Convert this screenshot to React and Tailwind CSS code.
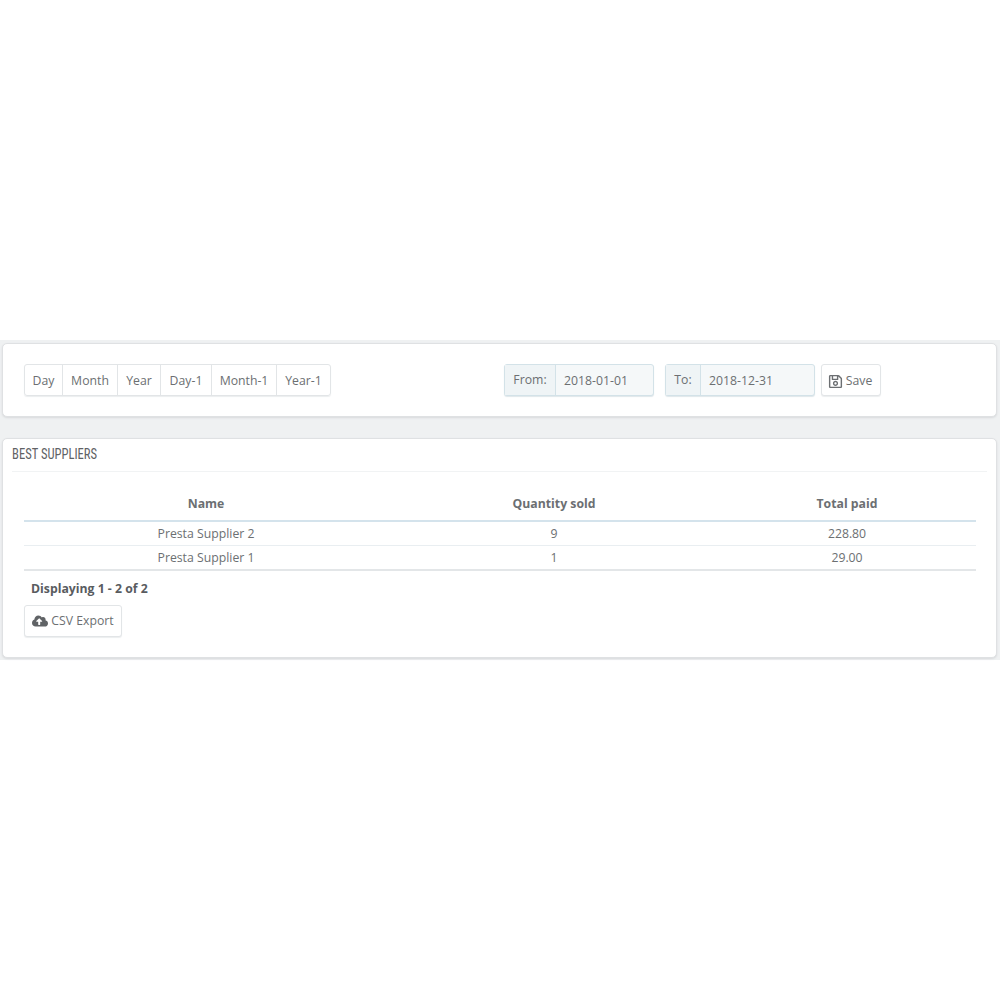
import React from "react";
import { FaRegSave, FaCloudUploadAlt } from "react-icons/fa";

const ranges = [
  ["Day", "w-[37px]"],
  ["Month", "w-[55px]"],
  ["Year", "w-[43px]"],
  ["Day-1", "w-[51px]"],
  ["Month-1", "w-[65px]"],
  ["Year-1", "w-[54px]"],
];

function DateField({ label, value, labelW, inputW }) {
  return (
    <div className="flex h-[32px] rounded-[3px] border border-[#d3e2e8] bg-[#f5f8f9] shadow-[0_1px_1px_#dfe7ea]">
      <div className={`${labelW} flex items-center justify-center border-r border-[#d3e2e8] bg-[#eff4f6]`}>{label}</div>
      <div className={`${inputW} flex items-center pl-[8px] pt-[2px]`}>{value}</div>
    </div>
  );
}

const rows = [
  ["Presta Supplier 2", "9", "228.80"],
  ["Presta Supplier 1", "1", "29.00"],
];

export default function App() {
  return (
    <div className="min-h-[1000px] bg-white pt-[340px] text-[12.25px] text-[#6c6f72] font-['Open_Sans',sans-serif]">
      <div className="bg-[#eff1f2] px-[2px] pb-[2px] pt-[3px] pr-[3px]">
        <div className="flex h-[74px] items-center rounded-[5px] border border-[#dfe1e3] bg-white pl-[21px] shadow-[0_1px_2px_#d8dadc]">
          <div className="flex h-[32px] rounded-[3px] border border-[#e2e5e7] shadow-[0_1px_1px_#eceeef]">
            {ranges.map(([t, w], i) => (
              <div key={t} className={`${w} flex items-center justify-center pt-[2px] ${i ? "border-l border-[#e2e5e7]" : ""}`}>{t}</div>
            ))}
          </div>
          <div className="ml-[173px] flex items-center">
            <DateField label="From:" value="2018-01-01" labelW="w-[51px]" inputW="w-[97px]" />
            <div className="w-[11px]" />
            <DateField label="To:" value="2018-12-31" labelW="w-[35px]" inputW="w-[113px]" />
            <div className="ml-[6px] flex h-[32px] w-[60px] items-center justify-center gap-[3px] rounded-[3px] border border-[#e2e5e7] bg-white pt-[2px] pr-[2px] shadow-[0_1px_1px_#eceeef]">
              <FaRegSave className="text-[15px]" />
              <span>Save</span>
            </div>
          </div>
        </div>

        <div className="mt-[21px] h-[220px] rounded-[5px] border border-[#dfe1e3] bg-white shadow-[0_1px_2px_#d8dadc]">
          <div className="mx-[9px] h-[33px] border-b border-[#f1f3f4] pt-[6px] text-[14px] leading-[18px] text-[#5f6265] font-['Liberation_Sans_Narrow','Roboto_Condensed','Liberation_Sans',sans-serif]">
            <span className="inline-block origin-left scale-x-[0.9]">BEST SUPPLIERS</span>
          </div>
          <div className="px-[21px] pt-[16px]">
            <table className="w-[952px] table-fixed border-collapse text-center">
              <thead>
                <tr className="h-[33px] border-b-2 border-[#d4e3ec]">
                  <th className="w-[364px] font-bold text-[#6c6f72]">Name</th>
                  <th className="w-[332px] font-bold text-[#6c6f72]">Quantity sold</th>
                  <th className="pr-[2px] font-bold text-[#6c6f72]">Total paid</th>
                </tr>
              </thead>
              <tbody>
                {rows.map((r, i) => (
                  <tr key={i} className={i ? "h-[25px] border-b-2 border-[#e3e6e8]" : "h-[24px] border-b border-[#e9eef1]"}>
                    {r.map((c, j) => (
                      <td key={j} className={j === 2 ? "pr-[2px] pt-[2px]" : "pt-[2px]"}>{c}</td>
                    ))}
                  </tr>
                ))}
              </tbody>
            </table>
            <div className="mt-[9px] pl-[7px] leading-[18px] font-bold text-[#595c5f]">Displaying 1 - 2 of 2</div>
            <div className="mt-[7px] flex h-[32px] w-[98px] items-center justify-center gap-[3px] rounded-[3px] border border-[#e2e5e7] bg-white shadow-[0_1px_1px_#eceeef]">
              <FaCloudUploadAlt className="text-[16px] text-[#606366]" />
              <span>CSV Export</span>
            </div>
          </div>
        </div>
      </div>
    </div>
  );
}
